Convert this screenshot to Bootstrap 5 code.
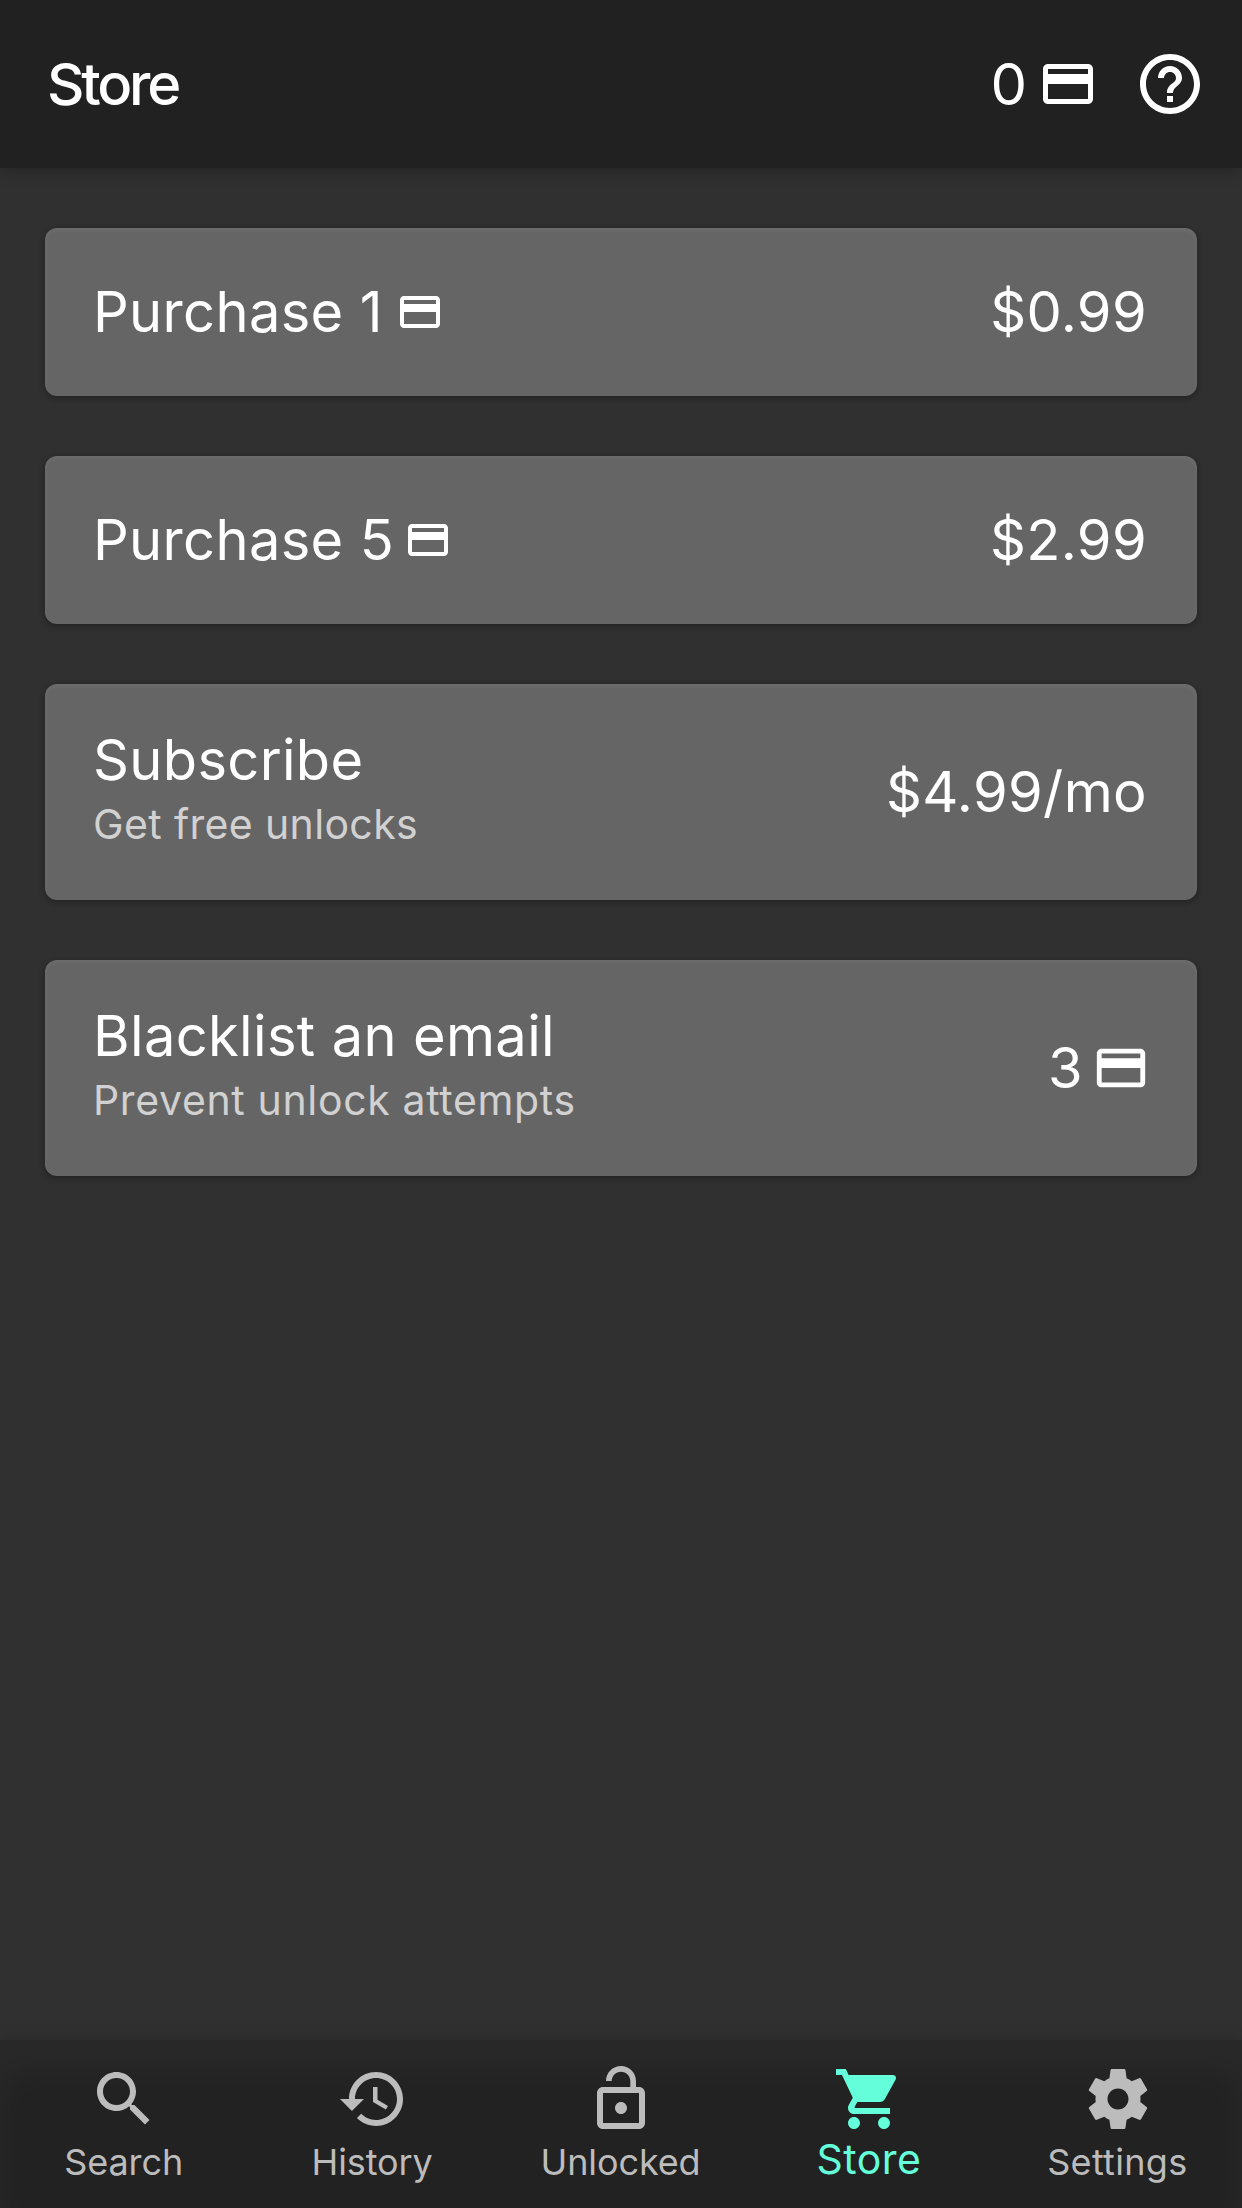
<!DOCTYPE html>
<html lang="en">
<head>
<meta charset="utf-8">
<meta name="viewport" content="width=device-width, initial-scale=1">
<title>Store</title>
<link href="https://cdn.jsdelivr.net/npm/bootstrap@5.3.0/dist/css/bootstrap.min.css" rel="stylesheet">
<style>
  body { font-family: Inter, "Liberation Sans", sans-serif; background: #303030; color: #fff; }
  svg { display: block; flex: none; fill: currentColor; }
  .app-bar { height: 168px; padding: 0 36px 0 47px; background: #212121; box-shadow: 0 3px 14px rgba(0,0,0,.24); z-index: 2; }
  .app-title { font-size: 58px; font-weight: 550; letter-spacing: -3.2px; line-height: 72px; }
  .balance { font-size: 58px; line-height: 72px; gap: 11px; margin-right: 36px; }
  .offers { padding: 60px 45px 0; gap: 60px; }
  .offer { min-height: 168px; padding: 0 47px 0 48px; border: 0; border-radius: 12px; background: #656565; color: #fff;
    font-size: 56px; line-height: 72px; letter-spacing: .35px; text-align: left;
    box-shadow: 0 2px 6px rgba(0,0,0,.32), inset 0 2px 5px rgba(255,255,255,.06); }
  .offer-text { padding: 40px 0 48px; }
  .offer-note { font-size: 41px; line-height: 56px; letter-spacing: .36px; color: #d1d1d1; }
  .offer-note.wide { letter-spacing: .65px; }
  .price { margin-right: 3px; }
  .gap-single { gap: 13px; }
  .gap-pack { gap: 10px; }
  .gap-cost { gap: 9px; }
  .tabs { height: 168px; background: #222; box-shadow: 0 -3px 14px rgba(0,0,0,.1), inset 0 30px 40px rgba(255,255,255,.035); }
  .tab { flex: 1 1 0; padding-top: 23px; color: #bcbcbc; text-decoration: none; font-size: 36px; line-height: 36px; gap: 9px; }
  .tab span { margin-right: 1px; letter-spacing: -.1px; }
  .tab.current { color: #64ffda; font-size: 41px; gap: 6px; }
  .tab.current span { letter-spacing: .5px; }
  .tab .spaced { letter-spacing: .3px; }
</style>
<script src="https://cdn.jsdelivr.net/npm/bootstrap@5.3.0/dist/js/bootstrap.bundle.min.js"></script>
</head>
<body>
<svg width="0" height="0" class="position-absolute" aria-hidden="true">
  <symbol id="credit" viewBox="0 0 24 24"><path d="M20 4H4c-1.11 0-1.99.89-1.99 2L2 18c0 1.11.89 2 2 2h16c1.11 0 2-.89 2-2V6c0-1.11-.89-2-2-2zm0 14H4v-6h16v6zm0-10H4V6h16v2z"/></symbol>
</svg>
<div class="d-flex flex-column vh-100 overflow-hidden">
  <header class="app-bar d-flex align-items-center position-relative">
    <div class="app-title me-auto">Store</div>
    <div class="balance d-flex align-items-center"><span>0</span><svg width="60" height="60"><use href="#credit"/></svg></div>
    <svg width="72" height="72" viewBox="0 0 24 24"><path d="M11 18h2v-2h-2v2zm1-16C6.48 2 2 6.48 2 12s4.48 10 10 10 10-4.480 10-10S17.520 2 12 2zm0 18c-4.410 0-8-3.590-8-8s3.590-8 8-8 8 3.590 8 8-3.590 8-8 8zm0-14c-2.210 0-4 1.790-4 4h2c0-1.100.9-2 2-2s2 .9 2 2c0 2-3 1.750-3 5h2c0-2.250 3-2.500 3-5 0-2.210-1.790-4-4-4z"/></svg>
  </header>

  <main class="offers d-flex flex-column flex-grow-1">
    <button class="offer d-flex align-items-center justify-content-between">
      <span class="d-flex align-items-center gap-single"><span>Purchase 1</span><svg width="48" height="48"><use href="#credit"/></svg></span>
      <span class="price">$0.99</span>
    </button>
    <button class="offer d-flex align-items-center justify-content-between">
      <span class="d-flex align-items-center gap-pack"><span>Purchase 5</span><svg width="48" height="48"><use href="#credit"/></svg></span>
      <span class="price">$2.99</span>
    </button>
    <button class="offer d-flex align-items-center justify-content-between">
      <span class="offer-text d-flex flex-column"><span>Subscribe</span><span class="offer-note">Get free unlocks</span></span>
      <span class="price">$4.99/mo</span>
    </button>
    <button class="offer d-flex align-items-center justify-content-between">
      <span class="offer-text d-flex flex-column"><span>Blacklist an email</span><span class="offer-note wide">Prevent unlock attempts</span></span>
      <span class="d-flex align-items-center gap-cost"><span>3</span><svg width="58" height="58"><use href="#credit"/></svg></span>
    </button>
  </main>

  <nav class="tabs d-flex">
    <a class="tab d-flex flex-column align-items-center" href="#">
      <svg width="72" height="72" viewBox="0 0 24 24"><path d="M15.500 14h-.79l-.28-.27C15.410 12.590 16 11.110 16 9.500 16 5.910 13.090 3 9.500 3S3 5.910 3 9.500 5.910 16 9.500 16c1.610 0 3.090-.59 4.230-1.570l.27.28v.79l5 4.990L20.490 19l-4.990-5zm-6 0C7.010 14 5 11.990 5 9.500S7.010 5 9.500 5 14 7.010 14 9.500 11.990 14 9.500 14z"/></svg>
      <span>Search</span>
    </a>
    <a class="tab d-flex flex-column align-items-center" href="#">
      <svg width="72" height="72" viewBox="0 0 24 24"><path d="M13 3c-4.970 0-9 4.030-9 9H1l3.890 3.890.07.14L9 12H6c0-3.870 3.130-7 7-7s7 3.130 7 7-3.130 7-7 7c-1.930 0-3.680-.79-4.940-2.060l-1.420 1.420C8.270 19.990 10.510 21 13 21c4.970 0 9-4.030 9-9s-4.030-9-9-9zm-1 5v5l4.280 2.540.72-1.210-3.500-2.080V8H12z"/></svg>
      <span>History</span>
    </a>
    <a class="tab d-flex flex-column align-items-center" href="#">
      <svg width="72" height="72" viewBox="0 0 24 24"><path d="M12 17c1.100 0 2-.9 2-2s-.9-2-2-2-2 .9-2 2 .9 2 2 2zm6-9h-1V6c0-2.760-2.240-5-5-5S7 3.240 7 6h1.900c0-1.710 1.390-3.100 3.100-3.100s3.100 1.390 3.100 3.100v2H6c-1.100 0-2 .9-2 2v10c0 1.100.9 2 2 2h12c1.100 0 2-.9 2-2V10c0-1.100-.9-2-2-2zm0 12H6V10h12v10z"/></svg>
      <span>Unlocked</span>
    </a>
    <a class="tab current d-flex flex-column align-items-center" href="#">
      <svg width="72" height="72" viewBox="0 0 24 24"><path d="M7 18c-1.100 0-1.990.9-1.990 2S5.900 22 7 22s2-.9 2-2-.9-2-2-2zM1 2v2h2l3.600 7.590-1.350 2.450c-.16.28-.25.61-.25.96 0 1.100.9 2 2 2h12v-2H7.420c-.14 0-.25-.11-.25-.25l.03-.12.9-1.630h7.450c.75 0 1.410-.41 1.750-1.030l3.580-6.490c.08-.14.12-.31.12-.48 0-.55-.45-1-1-1H5.210l-.94-2H1zm16 16c-1.100 0-1.990.9-1.990 2s.89 2 1.990 2 2-.9 2-2-.9-2-2-2z"/></svg>
      <span>Store</span>
    </a>
    <a class="tab d-flex flex-column align-items-center" href="#">
      <svg width="72" height="72" viewBox="0 0 24 24"><path d="M19.430 12.980c.04-.32.07-.64.07-.98s-.03-.66-.07-.98l2.110-1.650c.19-.15.24-.42.12-.64l-2-3.460c-.12-.22-.39-.3-.61-.22l-2.490 1c-.52-.4-1.080-.73-1.690-.98l-.38-2.650C14.460 2.180 14.250 2 14 2h-4c-.25 0-.46.18-.49.42l-.38 2.650c-.61.25-1.170.59-1.690.98l-2.490-1c-.23-.09-.49 0-.61.22l-2 3.460c-.13.22-.07.49.12.64l2.110 1.650c-.04.32-.07.65-.07.98s.03.66.07.98l-2.110 1.650c-.19.15-.24.42-.12.64l2 3.460c.12.22.39.3.61.22l2.490-1c.52.4 1.080.73 1.690.98l.38 2.650c.03.24.24.42.49.42h4c.25 0 .46-.18.49-.42l.38-2.650c.61-.25 1.170-.59 1.690-.98l2.490 1c.23.09.49 0 .61-.22l2-3.460c.12-.22.07-.49-.12-.64l-2.110-1.650zM12 15.500c-1.930 0-3.500-1.570-3.500-3.500s1.570-3.500 3.500-3.500 3.500 1.570 3.500 3.500-1.570 3.500-3.500 3.500z"/></svg>
      <span class="spaced">Settings</span>
    </a>
  </nav>
</div>
</body>
</html>
